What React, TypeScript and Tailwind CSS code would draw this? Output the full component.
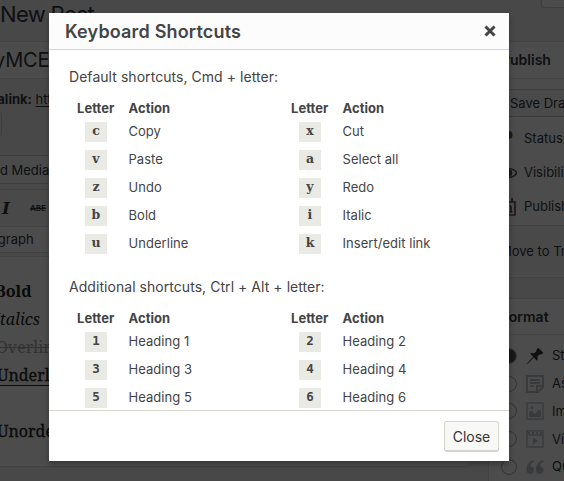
import React from "react";

type Shortcut = { letter: string; action: string };

const defaults: Shortcut[] = [
  { letter: "c", action: "Copy" },
  { letter: "x", action: "Cut" },
  { letter: "v", action: "Paste" },
  { letter: "a", action: "Select all" },
  { letter: "z", action: "Undo" },
  { letter: "y", action: "Redo" },
  { letter: "b", action: "Bold" },
  { letter: "i", action: "Italic" },
  { letter: "u", action: "Underline" },
  { letter: "k", action: "Insert/edit link" },
];

const additional: Shortcut[] = [1, 2, 3, 4, 5, 6].map((n) => ({
  letter: String(n),
  action: `Heading ${n}`,
}));

function Heading() {
  return (
    <div className="mb-px flex h-[18px] w-[214px] items-center font-bold leading-[18px]">
      <span className="w-[52px] pl-2">Letter</span>
      <span className="pl-[7.500px]">Action</span>
    </div>
  );
}

function ShortcutTable({ rows }: { rows: Shortcut[] }) {
  return (
    <div className="flex flex-wrap text-[13px] tracking-[0.04px]">
      <Heading />
      <Heading />
      {rows.map((r) => (
        <div key={r.letter} className="flex h-7 w-[214px] items-center">
          <span className="flex w-[52px] justify-center pl-[2px]">
            <kbd
              className={
                /\d/.test(r.letter)
                  ? "flex h-5 w-[22px] justify-center bg-[#eaeae5] font-['DejaVu_Sans_Mono',monospace] text-[12.500px] font-bold leading-[17px]"
                  : "flex h-5 w-[22px] justify-center bg-[#eaeae5] font-['DejaVu_Serif',serif] text-[12.500px] font-bold leading-[17px]"
              }
            >
              {r.letter}
            </kbd>
          </span>
          <span className="pl-[7.500px]">{r.action}</span>
        </div>
      ))}
    </div>
  );
}

function Modal() {
  return (
    <div className="absolute left-[49px] top-[13px] flex h-[448px] w-[460px] flex-col bg-white text-[#444] shadow-[0_3px_6px_rgba(0,0,0,0.3)]">
      <div className="flex h-[37px] shrink-0 items-center justify-between border-b border-[#d5d5d3] bg-[#fcfcfc] pl-4 pr-[13px]">
        <h1 className="pt-[2px] text-[18px] font-semibold leading-9 tracking-[0.17px]">Keyboard Shortcuts</h1>
        <svg className="size-3" viewBox="0 0 12 12" stroke="#444" strokeWidth="3">
          <path d="M1.5 1.5 10.5 10.5M10.5 1.5 1.5 10.5" />
        </svg>
      </div>
      <div className="h-[360px] overflow-hidden pl-5 pt-[17px]">
        <p className="text-[14px] leading-5 tracking-[0.05px]">Default shortcuts, Cmd + letter:</p>
        <div className="pt-3">
          <ShortcutTable rows={defaults} />
        </div>
        <p className="pt-[19px] text-[14px] leading-5 tracking-[0.05px]">Additional shortcuts, Ctrl + Alt + letter:</p>
        <div className="pt-3">
          <ShortcutTable rows={additional} />
        </div>
      </div>
      <div className="flex flex-1 items-start justify-end border-t border-[#d8d8d0] pr-[10px] pt-[10px]">
        <button className="h-[31px] w-[55px] rounded-[3px] border border-b-2 border-[#d5d5cd] bg-[#f8f8f6] pt-px text-[14px] leading-7 text-[#333]">
          Close
        </button>
      </div>
    </div>
  );
}

const glyph = "size-5 shrink-0";

function PinIcon() {
  return (
    <svg className={glyph} viewBox="0 0 20 20" fill="#32373c">
      <path d="M11.500 3.500 13.300 1.800l5 5-1.700 1.700c-.8-.4-1.700-.3-2.400.3l-2 2c.7 1.300.6 2.700-.2 4l-3.300-3.300C6.500 14 4 16.500 1.500 18.500 3.500 15.500 6 13 8.200 10.800L5 7.600c1.300-.8 2.700-.8 4-.1l2-2c.6-.6.8-1.300.5-2z" />
    </svg>
  );
}

function AsideIcon() {
  return (
    <svg className={glyph} viewBox="0 0 20 20" fill="none" stroke="#bfc3c7" strokeWidth="2">
      <path d="M2 2h16v11l-5 5H2zM12 18v-6h6M5 6h10M5 9h10M5 12h4" />
    </svg>
  );
}

function ImageIcon() {
  return (
    <svg className={glyph} viewBox="0 0 20 20" fill="none" stroke="#bfc3c7" strokeWidth="1.5">
      <path d="M2 2h16v16H2z" />
      <path fill="#bfc3c7" stroke="none" d="M4 16v-5l2.500-1.500L10 13l4-5 2 2.500V16zM7 5a1.500 1.500 0 1 1 0 3 1.500 1.500 0 0 1 0-3z" />
    </svg>
  );
}

function VideoIcon() {
  return (
    <svg className={glyph} viewBox="0 0 20 20" fill="none" stroke="#bfc3c7" strokeWidth="1.5">
      <path d="M2 2h16v16H2zM2 6h16" />
      <path d="M3 4h14" strokeDasharray="2 2" strokeWidth="2" />
      <path fill="#bfc3c7" stroke="none" d="M8 8.500l5 3.500-5 3.500z" />
    </svg>
  );
}

function QuoteIcon() {
  return (
    <svg className={glyph} viewBox="0 0 20 20" fill="#bfc3c7">
      <path d="M9 3C4 4 1.500 8 1.500 12.500 1.500 15.500 3 17 5 17s4-1.500 4-3.700S7.500 9.500 5.500 9.500C5.500 7 7 5 9 4.500zM18.500 3c-5 1-7.500 5-7.500 9.500 0 3 1.500 4.500 3.500 4.500s4-1.500 4-3.700-1.500-3.800-3.500-3.800c0-2.500 1.500-4.500 3.500-5z" />
    </svg>
  );
}

function KeyIcon() {
  return (
    <svg className={glyph} viewBox="0 0 20 20" fill="#555">
      <path d="M9 2h2.500c3 0 4 1.500 4 4s-1.500 4-4 4l-2-1-5.500 8H2v-3l6-7z" />
    </svg>
  );
}

function EyeIcon() {
  return (
    <svg className={glyph} viewBox="0 0 20 20" fill="none" stroke="#555" strokeWidth="1.500">
      <path d="M2 10c4-6 14-6 18 0-4 6-14 6-18 0z" />
      <circle cx="11.500" cy="10" r="3" fill="#555" />
    </svg>
  );
}

function CalendarIcon() {
  return (
    <svg className={glyph} viewBox="0 0 20 20" fill="none" stroke="#555" strokeWidth="1.700">
      <path d="M2 5h16v13H2zM6 1v4M10.500 1v4M15 1v4M14 9v6M12.500 9H14M12.500 15h3M5 9h3v6H5" />
    </svg>
  );
}

const formats: [string, () => React.ReactElement][] = [
  ["Standard", PinIcon],
  ["Aside", AsideIcon],
  ["Image", ImageIcon],
  ["Video", VideoIcon],
  ["Quote", QuoteIcon],
];

const status: [string, () => React.ReactElement][] = [
  ["Status: Draft", KeyIcon],
  ["Visibility: Public", EyeIcon],
  ["Publish immediately", CalendarIcon],
];

function EditorColumn() {
  return (
    <div className="w-[468px] shrink-0">
      <h1 className="h-[41px] text-[22px] leading-[28px] tracking-[-0.65px]">New Post</h1>
      <div className="h-[38px] border-y border-[#ddd] bg-white">
        <div className="-ml-[6px] text-[20px] leading-[37px] tracking-[-0.2px]">yMCE</div>
      </div>
      <div className="h-[34px] text-[13px] leading-[41px]">
        <div className="-ml-[36px]">
          <b>Permalink:</b> <span className="underline underline-offset-2">http:</span>
        </div>
      </div>
      <div className="h-[22px] w-[2px] rounded-r-sm border border-l-0 border-[#ccc]" />
      <div className="mt-5 h-[29px] border-y border-[#ccc] bg-[#f7f7f7] text-[13px] leading-[28px]">
        <div className="-ml-[17px]">Add Media</div>
      </div>
      <div className="mt-[5px] h-[68px] border-y border-[#ddd] bg-[#f5f5f5]">
        <div className="flex h-[36px] items-center pl-[2px]">
          <span className="w-7 font-['DejaVu_Serif',serif] text-[17px] font-bold italic leading-5">I</span>
          <span className="text-[8px] font-semibold line-through">ABE</span>
        </div>
        <div className="h-[27px] border-y border-[#ddd] bg-white text-[13px] leading-[25px]">
          <div className="-ml-[30px]">Paragraph</div>
        </div>
      </div>
      <div className="h-[210px] overflow-hidden border-b border-[#ddd] bg-white pt-5 font-['Noto_Serif','DejaVu_Serif_Condensed','DejaVu_Serif',serif] text-[16px] leading-[28px] text-[#222]">
        <p className="-ml-[5px] font-bold">Bold</p>
        <p className="-ml-[6px] italic">Italics</p>
        <p className="-ml-[4px] text-[#aaa] line-through">Overline</p>
        <p className="-ml-[3px] underline underline-offset-4 [-webkit-text-stroke:0.3px_#222]">Underline</p>
        <p className="-ml-[3px] mt-[28px] [-webkit-text-stroke:0.3px_#222]">Unordered</p>
      </div>
    </div>
  );
}

function SideColumn() {
  return (
    <div className="w-[280px] shrink-0">
      <div className="ml-[53px] h-2 rounded-b border border-t-0 border-[#ccc] bg-white" />
      <section className="mt-[33px] h-[237px] border border-[#e2e2e2] bg-white">
        <h2 className="h-[37px] border-b border-[#e8e8e8] pl-[12px] text-[14px] font-semibold leading-[36px]">Publish</h2>
        <div className="ml-[12px] mt-[10px] h-7 w-[90px] rounded border border-[#ccc] bg-[#f7f7f7] pl-2 text-[13px] leading-[27px]">
          Save Draft
        </div>
        <div className="mt-[5px] text-[13px]">
          {status.map(([label, Icon]) => (
            <div key={label} className="flex h-[34px] items-center gap-[7px] pl-2">
              <Icon />
              {label}
            </div>
          ))}
        </div>
        <div className="mt-px border-t border-[#ddd] bg-[#f5f5f5] pl-[11px] text-[13px] leading-[50px]">Move to Trash</div>
      </section>
      <section className="mt-5 h-[220px] border border-[#e2e2e2] bg-white">
        <h2 className="h-[36px] border-b border-[#e8e8e8] pl-[12px] text-[14px] font-semibold leading-[35px]">Format</h2>
        <div className="pt-[7px]">
          {formats.map(([label, Icon], i) => (
            <div key={label} className="flex h-[27.800px] items-center pl-[12px] text-[13px]">
              <span className="flex size-4 items-center justify-center rounded-full border border-[#aaa]">
                {i === 0 && <span className="size-[14px] shrink-0 rounded-full bg-[#50505c]" />}
              </span>
              <span className="ml-[8px] mr-[7px] flex">
                <Icon />
              </span>
              {label}
            </div>
          ))}
        </div>
      </section>
    </div>
  );
}

export default function App() {
  return (
    <div className="relative h-[481px] w-[564px] overflow-hidden bg-[#f1f1f1] font-['Inter','Liberation_Sans',sans-serif] text-[#32373c]">
      <div className="flex gap-5 whitespace-nowrap">
        <EditorColumn />
        <SideColumn />
      </div>
      <div className="absolute inset-0 bg-black/70" />
      <Modal />
    </div>
  );
}
